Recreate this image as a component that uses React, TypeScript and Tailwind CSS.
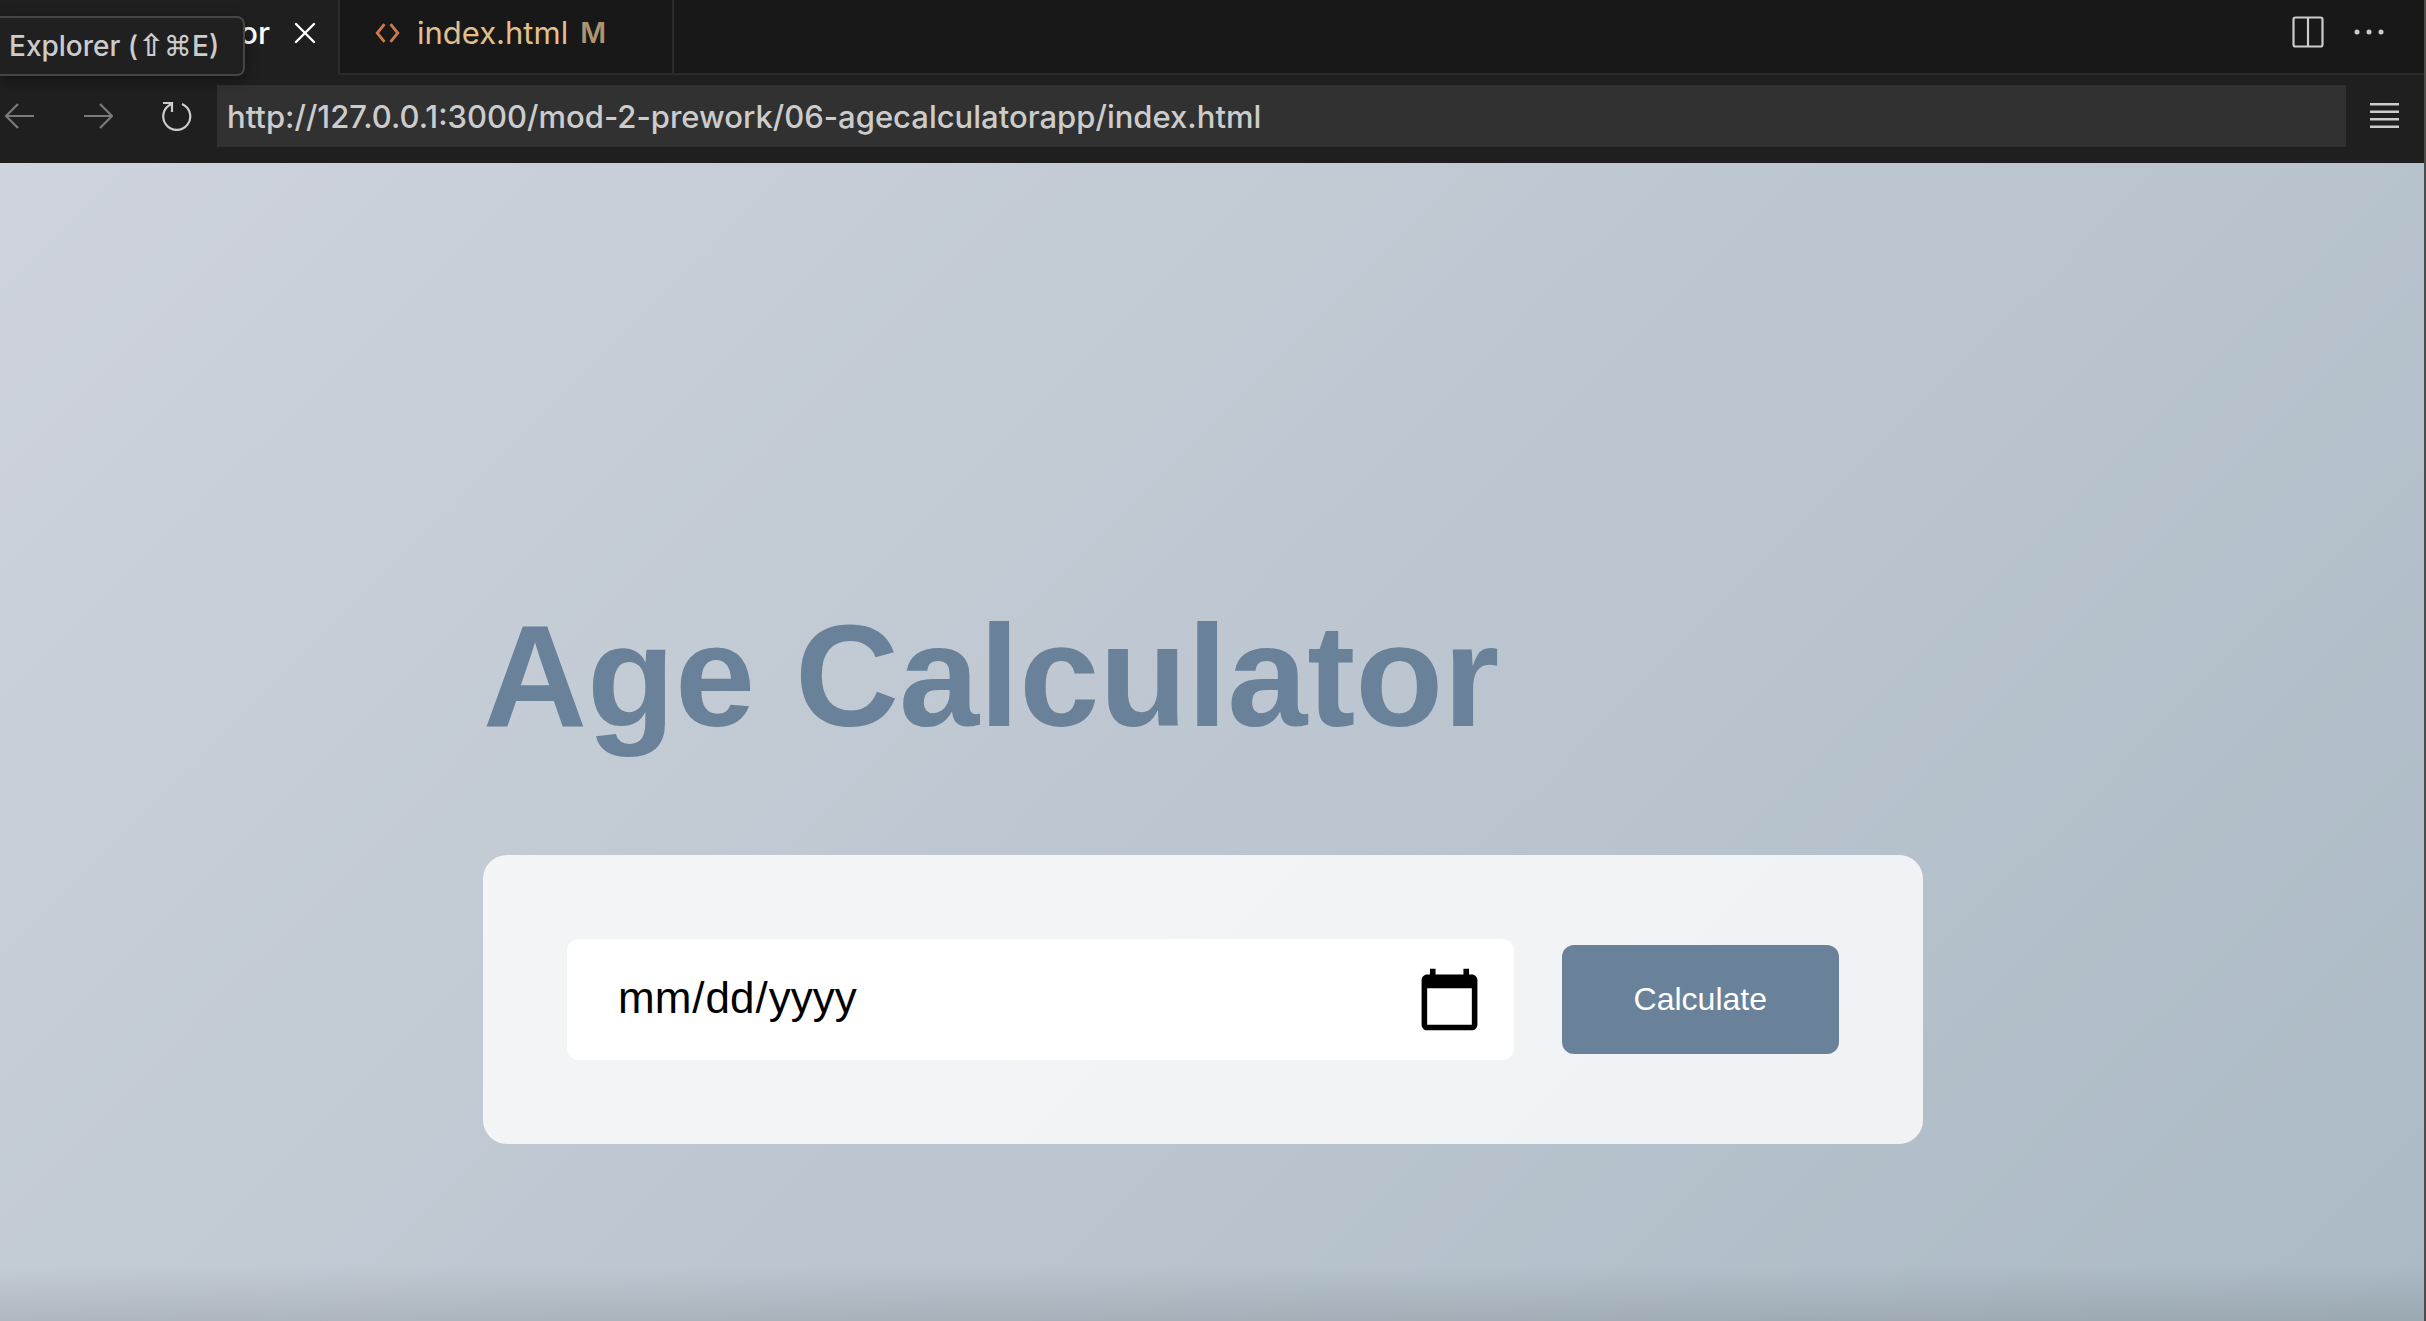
import React from "react";

function TitleTabs() {
  return (
    <header className="relative flex h-[75px] items-stretch bg-[#181818]">
      <nav className="flex" aria-label="Open editors">
        <div className="flex w-[338px] items-center justify-end gap-6 bg-[#1f1f1f] pr-[22px] pb-[10px]">
          <span className="text-[31px] leading-9 font-medium text-white">or</span>
          <button type="button" aria-label="Close tab">
            <svg width="22" height="22" viewBox="0 0 22 22" fill="none" stroke="#ffffff" strokeWidth="2.4" strokeLinecap="round">
              <path d="M2 2 20 20M20 2 2 20" />
            </svg>
          </button>
        </div>
        <div className="flex w-[336px] items-center border-x-2 border-b-2 border-[#2b2b2b] pb-2 pl-[35px]">
          <svg width="25" height="20" viewBox="0 0 25 20" fill="none" stroke="#cc7a4a" strokeWidth="2.8">
            <path d="M9.500 1.200 2.200 10l7.300 8.800M15.500 1.200 22.800 10l-7.300 8.800" />
          </svg>
          <span className="ml-[17px] text-[31px] leading-9 text-[#e2c08d]">index.html</span>
          <span className="ml-3 text-[28px] leading-9 font-semibold text-[#ad9570]">M</span>
        </div>
      </nav>
      <div className="flex grow items-center justify-end gap-[30px] border-b-2 border-[#2b2b2b] pr-10 pb-[10px]">
        <button type="button" aria-label="Split editor">
          <svg width="32" height="32" viewBox="0 0 32 32" fill="none" stroke="#cccccc" strokeWidth="2.2">
            <rect x="1.500" y="1.500" width="29" height="29" rx="2" />
            <path d="M16 1.500v29" />
          </svg>
        </button>
        <button type="button" aria-label="More actions">
          <svg width="30" height="6" viewBox="0 0 30 6" fill="#cccccc">
            <circle cx="3" cy="3" r="2.500" />
            <circle cx="15" cy="3" r="2.500" />
            <circle cx="27" cy="3" r="2.500" />
          </svg>
        </button>
      </div>
      <div
        role="tooltip"
        className="absolute top-4 left-0 z-10 flex h-[60px] w-[245px] items-center rounded-r-lg border-y-2 border-r-2 border-[#454545] bg-[#202020] pl-[9px] text-[28px] leading-8 font-medium whitespace-nowrap text-[#cccccc] shadow-[0_4px_14px_rgba(0,0,0,0.4)]"
      >
        <span>
          Explorer (<span className="font-['DejaVu_Sans',sans-serif] text-[31px] font-bold">⇧</span>
          <span className="font-['DejaVu_Sans',sans-serif]">⌘</span>E)
        </span>
      </div>
    </header>
  );
}

function AddressBar() {
  return (
    <div className="flex h-[88px] items-center bg-[#1f1f1f] pr-[25px] pb-[6px]">
      <div className="flex w-[217px] shrink-0 items-center gap-[49px] pl-1">
        <button type="button" aria-label="Back">
          <svg width="30" height="28" viewBox="0 0 30 28" fill="none" stroke="#7a7a7a" strokeWidth="2.2">
            <path d="M30 14H2M14 2 2 14l12 12" />
          </svg>
        </button>
        <button type="button" aria-label="Forward">
          <svg width="30" height="28" viewBox="0 0 30 28" fill="none" stroke="#7a7a7a" strokeWidth="2.2">
            <path d="M1 14h28M17 2l12 12-12 12" />
          </svg>
        </button>
        <button type="button" aria-label="Reload">
          <svg width="30" height="30" viewBox="0 0 30 30" fill="none" stroke="#cccccc" strokeWidth="2.2">
            <path d="M1 2h9v9M9.500 3A13.500 13.500 0 1 0 20 3" />
          </svg>
        </button>
      </div>
      <input
        type="text"
        aria-label="Address"
        defaultValue="http://127.0.0.1:3000/mod-2-prework/06-agecalculatorapp/index.html"
        className="h-[62px] min-w-0 grow bg-[#313131] px-[10px] text-[31px] leading-10 font-medium text-[#cccccc] outline-none"
      />
      <button type="button" aria-label="Menu" className="ml-6">
        <svg width="29" height="26" viewBox="0 0 29 26" fill="#cccccc">
          <path d="M0 0h29v2.500H0zM0 7.500h29v2.500H0zM0 15h29v2.500H0zM0 22.500h29v2.500H0z" />
        </svg>
      </button>
    </div>
  );
}

function AgeCalculator() {
  return (
    <main className="relative grow bg-[linear-gradient(135deg,#ced3dc_0%,#bfc8d2_45%,#abbac5_100%)] pt-[431px] pr-[18px] font-['Liberation_Sans',sans-serif]">
      <div className="mx-auto max-w-[1440px]">
        <h1 className="text-[144px] leading-[165px] font-bold text-[#6a8299]">Age Calculator</h1>
        <form className="mt-24 flex items-center gap-12 rounded-3xl bg-white/80 p-[84px]" onSubmit={(e) => e.preventDefault()}>
          <div className="relative grow">
            <input
              type="date"
              aria-label="Date of birth"
              className="block h-[121px] w-full rounded-xl bg-white px-[50px] pb-[3px] text-[44px] text-black outline-none [&::-webkit-calendar-picker-indicator]:opacity-0"
            />
            <svg
              className="pointer-events-none absolute top-[27px] right-[31px]"
              width="67"
              height="67"
              viewBox="0 0 24 24"
              fill="#000000"
            >
              <path d="M20 3h-1V1h-2v2H7V1H5v2H4c-1.100 0-2 .9-2 2v16c0 1.100.9 2 2 2h16c1.100 0 2-.9 2-2V5c0-1.100-.9-2-2-2zm0 18H4V8h16v13z" />
            </svg>
          </div>
          <button type="submit" className="rounded-xl bg-[#6a8299] px-[72px] py-9 text-[32px] leading-[37px] text-white">
            Calculate
          </button>
        </form>
      </div>
      <div className="pointer-events-none absolute inset-x-0 bottom-0 h-[56px] bg-linear-to-b from-black/0 to-black/10" />
    </main>
  );
}

export default function App() {
  return (
    <div className="flex min-h-screen flex-col border-r-2 border-[#4b4b49] bg-[#1f1f1f] font-['Inter',sans-serif]">
      <TitleTabs />
      <AddressBar />
      <AgeCalculator />
    </div>
  );
}
